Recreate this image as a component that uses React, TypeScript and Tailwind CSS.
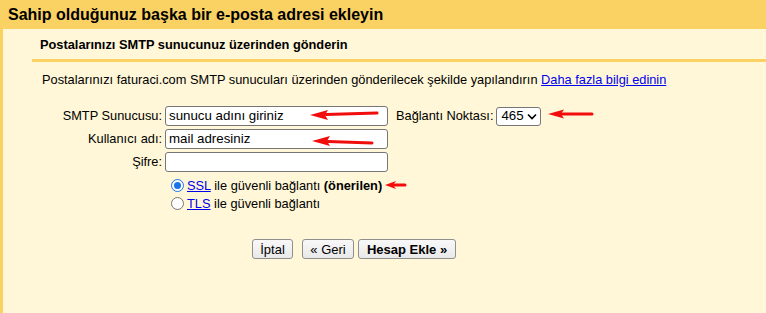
import React from "react";

// red annotation arrows drawn over the form
function Arrows() {
  const arrows = [
    { x1: 377, y1: 113, x2: 326, y2: 114.5, tip: [310, 115], back: 328, spread: 5 },
    { x1: 372, y1: 143, x2: 328, y2: 141.5, tip: [312, 141], back: 330, spread: 5 },
    { x1: 592, y1: 114, x2: 562, y2: 114, tip: [548, 114], back: 564, spread: 4.5 },
    { x1: 405, y1: 185, x2: 394, y2: 185, tip: [385, 185], back: 396, spread: 4 },
  ];
  return (
    <svg className="pointer-events-none absolute left-0 top-0" width={766} height={313}>
      {arrows.map((a, i) => (
        <g key={i}>
          <line x1={a.x1} y1={a.y1} x2={a.x2} y2={a.y2} stroke="#f20d0d" strokeWidth={3} strokeLinecap="round" />
          <polygon
            points={`${a.tip[0]},${a.tip[1]} ${a.back},${a.tip[1] - a.spread} ${a.back - 3},${a.tip[1]} ${a.back},${a.tip[1] + a.spread}`}
            fill="#f20d0d"
          />
        </g>
      ))}
    </svg>
  );
}

function Radio({ checked }: { checked?: boolean }) {
  return (
    <span
      className={
        "inline-flex h-[13px] w-[13px] shrink-0 items-center justify-center rounded-full border " +
        (checked ? "border-[#1a73e8] bg-white" : "border-[#767676] bg-white")
      }
    >
      {checked && <span className="h-[7px] w-[7px] rounded-full bg-[#1a73e8]" />}
    </span>
  );
}

export default function App() {
  const btn =
    "h-[20px] rounded-[3px] border border-[#8f8f8f] bg-gradient-to-b from-[#f8f8f8] to-[#e9e9e9] px-[6px] text-[13px] leading-none text-black";

  return (
    <div
      className="relative h-[313px] w-[766px] overflow-hidden bg-[#fad163] text-[12.8px] text-black"
      style={{ fontFamily: '"Liberation Sans", Arial, sans-serif' }}
    >
      <div className="flex h-[29px] items-center pl-[8px] text-[16px] font-bold leading-none">
        Sahip olduğunuz başka bir e-posta adresi ekleyin
      </div>

      <div className="ml-[3px] h-[284px] bg-[#fff7d7]">
        <div className="ml-[29px] flex h-[33px] items-center border-b-[3px] border-[#fad163] pl-[8px] pt-[1px] font-bold">
          Postalarınızı SMTP sunucunuz üzerinden gönderin
        </div>

        <div className="pl-[39px] pt-[10px] leading-[15px]">
          Postalarınızı faturaci.com SMTP sunucuları üzerinden gönderilecek şekilde yapılandırın{" "}
          <span className="text-[#0000ee] underline">Daha fazla bilgi edinin</span>
        </div>

        <div className="mt-[19px] grid grid-cols-[159px_223px_auto] items-center gap-x-[3px] gap-y-[3px]">
          <div className="text-right">SMTP Sunucusu:</div>
          <div className="flex h-[20px] items-center rounded-[3px] border border-[#767676] bg-white px-[3px] text-[13.3px]">
            sunucu adını giriniz
          </div>
          <div className="flex items-center pl-[5px]">
            <span>Bağlantı Noktası:</span>
            <span className="ml-[3px] flex h-[19px] w-[45px] items-center justify-between rounded-[3px] border border-[#767676] bg-white pl-[4px] pr-[3px] text-[13.3px]">
              465
              <svg width="10" height="7" viewBox="0 0 10 7">
                <path d="M1 1.5 L5 5.5 L9 1.5" fill="none" stroke="#000" strokeWidth="1.6" />
              </svg>
            </span>
          </div>

          <div className="text-right">Kullanıcı adı:</div>
          <div className="flex h-[20px] items-center rounded-[3px] border border-[#767676] bg-white px-[3px] text-[13.3px]">
            mail adresiniz
          </div>
          <div />

          <div className="text-right">Şifre:</div>
          <div className="h-[20px] rounded-[3px] border border-[#767676] bg-white" />
          <div />
        </div>

        <div className="ml-[168px] mt-[6px] flex flex-col gap-[3px]">
          <div className="flex items-center gap-[3px] leading-[15px]">
            <Radio checked />
            <span>
              <span className="text-[#0000ee] underline">SSL</span> ile güvenli bağlantı <b>(önerilen)</b>
            </span>
          </div>
          <div className="flex items-center gap-[3px] leading-[15px]">
            <Radio />
            <span>
              <span className="text-[#0000ee] underline">TLS</span> ile güvenli bağlantı
            </span>
          </div>
        </div>

        <div className="ml-[249px] mt-[28px] flex items-center">
          <button className={btn + " w-[41px]"}>İptal</button>
          <button className={btn + " ml-[9px] w-[52px]"}>« Geri</button>
          <button className={btn + " ml-[4px] w-[98px] text-[13.5px] font-bold"}>Hesap Ekle »</button>
        </div>
      </div>

      <Arrows />
    </div>
  );
}
